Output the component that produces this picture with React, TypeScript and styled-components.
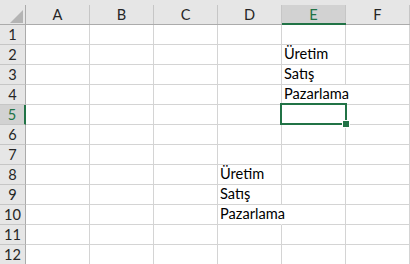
import styled, { createGlobalStyle } from 'styled-components'

const GlobalStyle = createGlobalStyle`
  html, body {
    margin: 0;
    padding: 0;
    background: #ffffff;
    overflow: hidden;
  }
  body {
    font-family: Lato, "Liberation Sans", sans-serif;
  }
`

const columns = ['A', 'B', 'C', 'D', 'E', 'F']
const rows = [1, 2, 3, 4, 5, 6, 7, 8, 9, 10, 11, 12]

// cell contents, keyed by address
const values: Record<string, string> = {
  E2: 'Üretim',
  E3: 'Satış',
  E4: 'Pazarlama',
  D8: 'Üretim',
  D9: 'Satış',
  D10: 'Pazarlama',
}

// cells whose text runs over the right gridline
const spills = ['E4', 'D10']

const activeCol = 'E'
const activeRow = 5

const App: React.FC = () => {
  return (
    <>
      <GlobalStyle />
      <Sheet>
        <HeaderCell>
          <Corner>
            <CornerTriangle />
          </Corner>
        </HeaderCell>
        {columns.map((col) => (
          <HeaderCell key={col} $active={col === activeCol}>
            <ColumnLabel $active={col === activeCol}>{col}</ColumnLabel>
          </HeaderCell>
        ))}
        {rows.map((row) => (
          <Row key={row} row={row} />
        ))}
      </Sheet>
    </>
  )
}

const Row: React.FC<{ row: number }> = ({ row }) => {
  return (
    <>
      <RowHeader $active={row === activeRow}>{row}</RowHeader>
      {columns.map((col) => {
        const address = `${col}${row}`
        const isActive = col === activeCol && row === activeRow
        return (
          <Cell key={address} $spill={spills.includes(address)} $active={isActive}>
            {values[address]}
            {isActive && (
              <Selection>
                <FillHandle />
              </Selection>
            )}
          </Cell>
        )
      })}
    </>
  )
}

export default App

const Sheet = styled.div`
  display: grid;
  grid-template-columns: 26px repeat(6, 64px);
  grid-template-rows: 25px repeat(12, 20px);
  width: 410px;
  height: 264px;
  overflow: hidden;
  color: #000000;
  font-size: 14.6px;
`

const HeaderCell = styled.div<{ $active?: boolean }>`
  box-sizing: border-box;
  padding-top: 5px;
  background: #e6e6e6;
  border-bottom: ${(p) => (p.$active ? '2px solid #217346' : '1px solid #ababab')};
`

const Corner = styled.div`
  position: relative;
  box-sizing: border-box;
  height: 100%;
  border-right: 1px solid #ababab;
`

const CornerTriangle = styled.div`
  position: absolute;
  right: 2px;
  bottom: 1px;
  width: 0;
  height: 0;
  border-left: 13px solid transparent;
  border-bottom: 13px solid #b4b4b4;
`

const ColumnLabel = styled.div<{ $active?: boolean }>`
  box-sizing: border-box;
  display: flex;
  align-items: center;
  justify-content: center;
  height: 100%;
  border-right: 1px solid #c6c6c6;
  background: ${(p) => (p.$active ? '#d2d2d2' : 'transparent')};
  color: ${(p) => (p.$active ? '#217346' : '#262626')};
`

const RowHeader = styled.div<{ $active?: boolean }>`
  box-sizing: border-box;
  display: flex;
  align-items: center;
  justify-content: center;
  background: ${(p) => (p.$active ? '#d2d2d2' : '#e6e6e6')};
  border-right: ${(p) => (p.$active ? '2px solid #217346' : '1px solid #ababab')};
  border-bottom: 1px solid #c6c6c6;
  color: ${(p) => (p.$active ? '#217346' : '#262626')};
`

const Cell = styled.div<{ $spill?: boolean; $active?: boolean }>`
  position: relative;
  box-sizing: border-box;
  display: flex;
  align-items: flex-end;
  padding: 0 2px 1px;
  border-right: 1px solid ${(p) => (p.$spill ? 'transparent' : '#d4d4d4')};
  border-bottom: 1px solid #d4d4d4;
  white-space: nowrap;
  line-height: 18px;
  z-index: ${(p) => (p.$active ? 3 : p.$spill ? 1 : 'auto')};
`

const Selection = styled.div`
  position: absolute;
  left: -2px;
  top: -2px;
  width: 67px;
  height: 22px;
  box-sizing: border-box;
  border: 2px solid #217346;
`

const FillHandle = styled.div`
  position: absolute;
  right: -5px;
  bottom: -5px;
  width: 6px;
  height: 6px;
  background: #217346;
  border: 1px solid #ffffff;
`
